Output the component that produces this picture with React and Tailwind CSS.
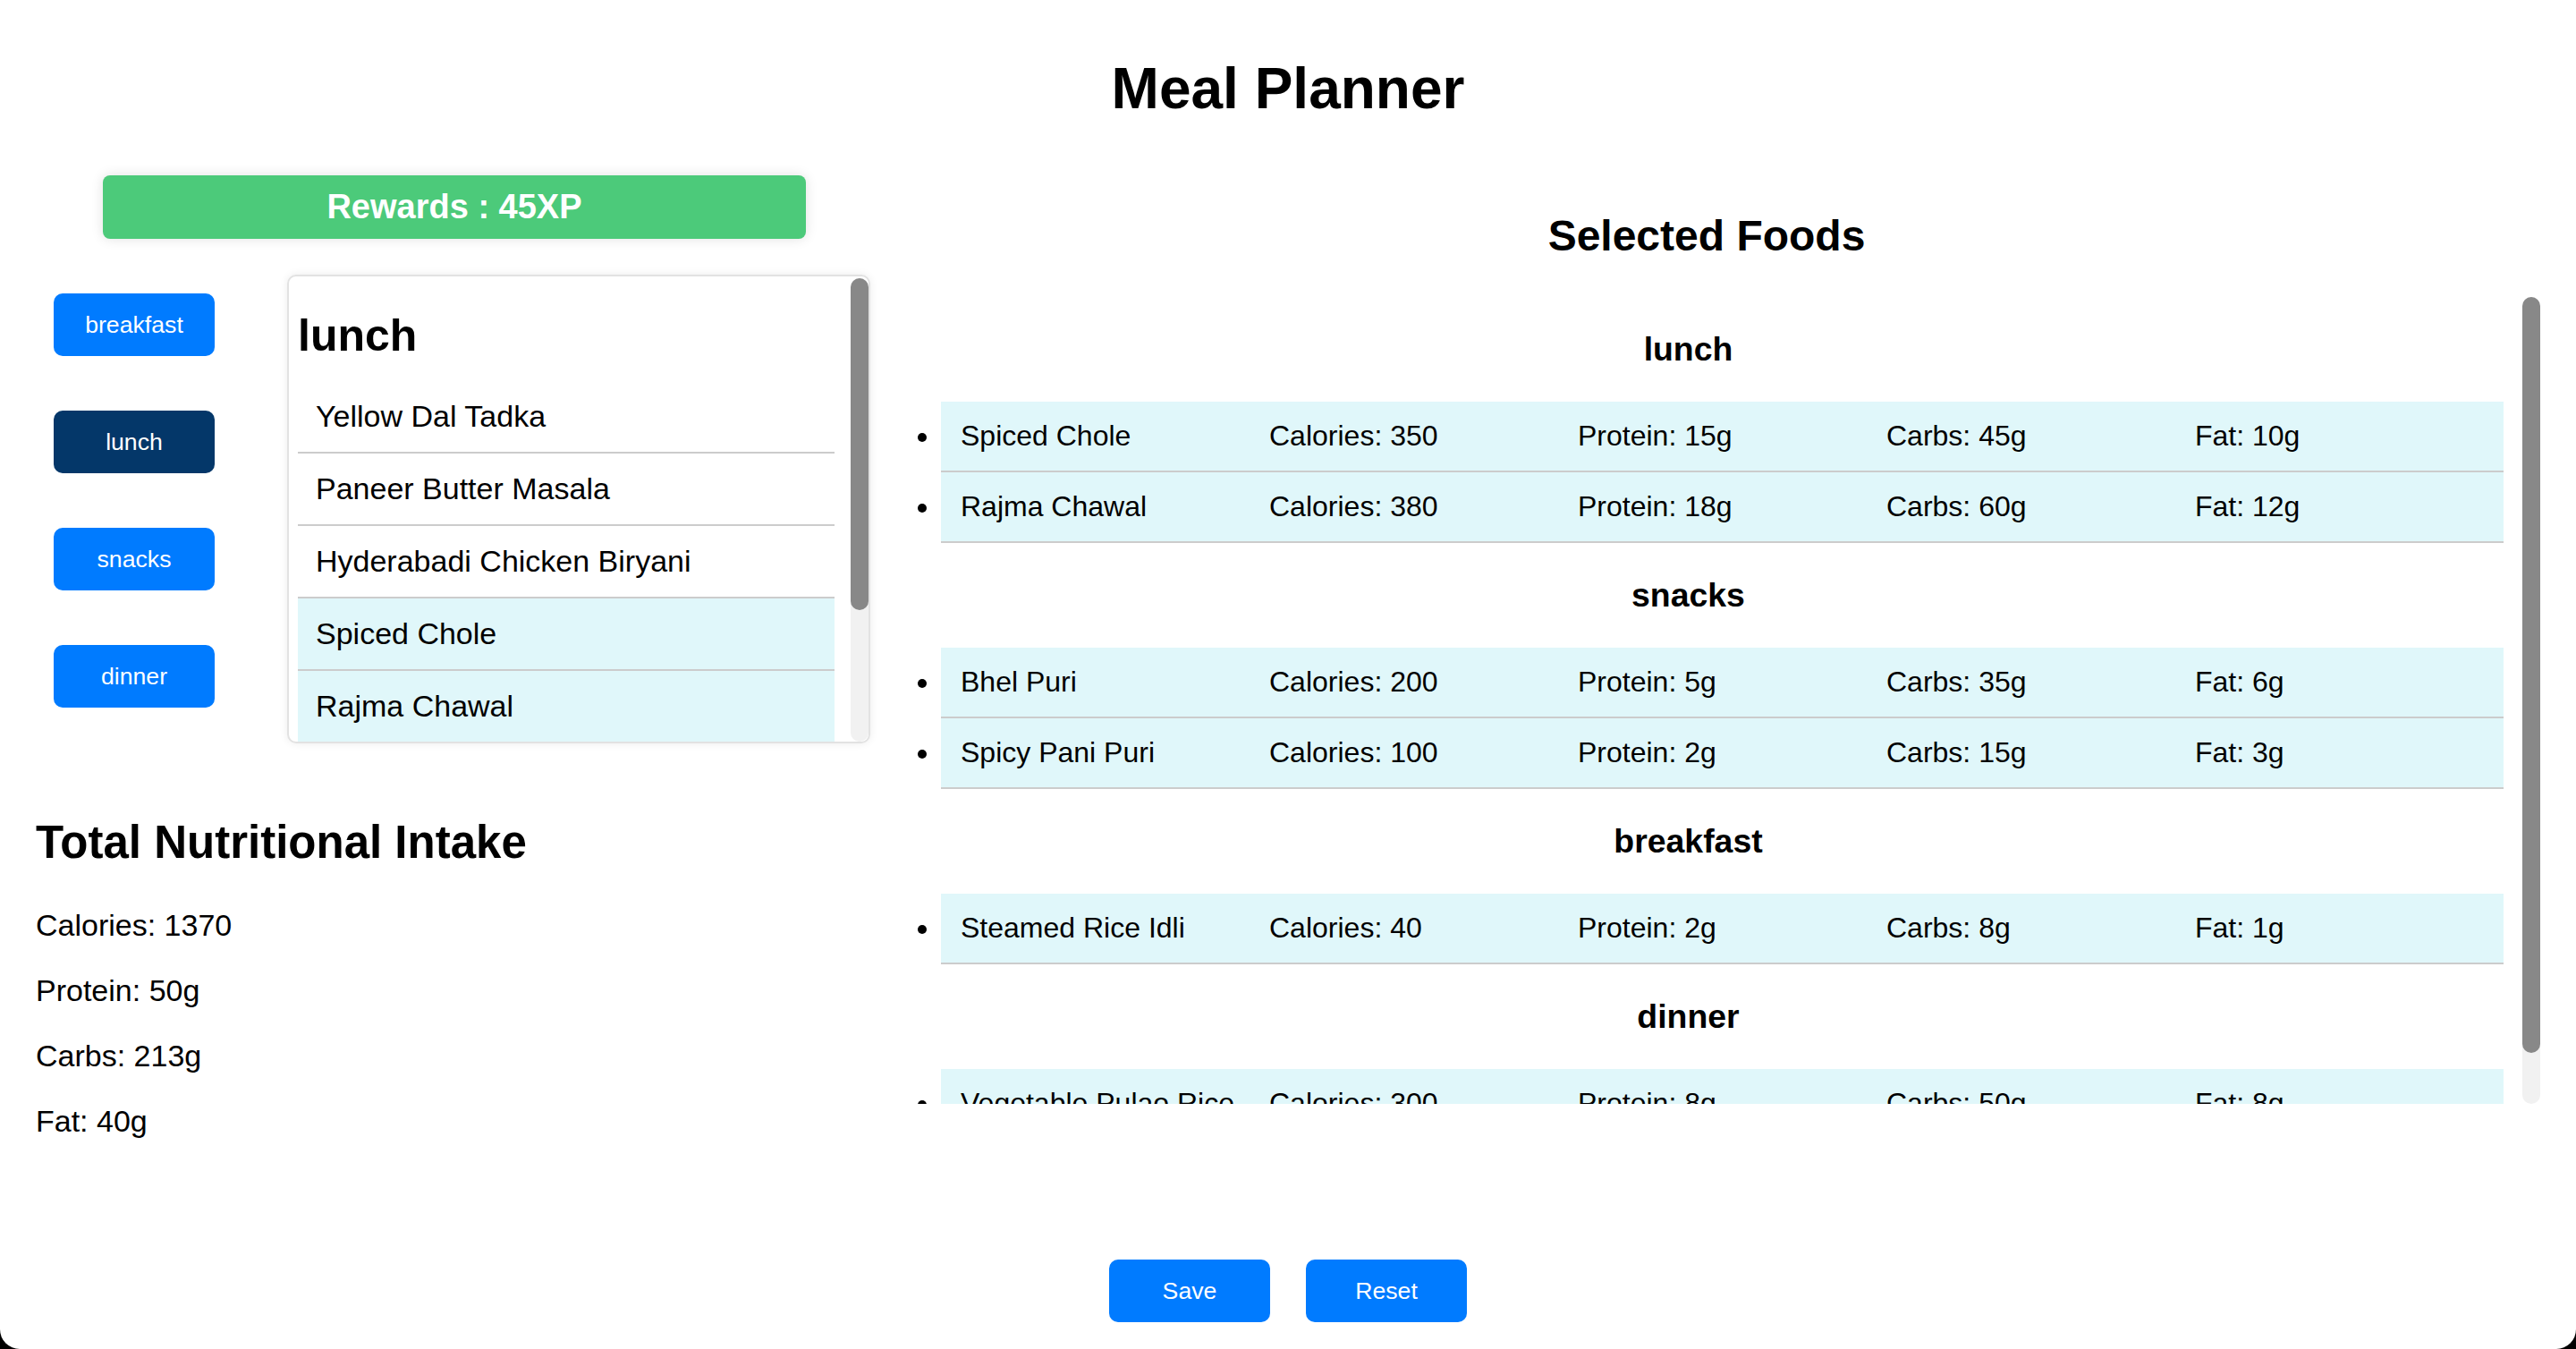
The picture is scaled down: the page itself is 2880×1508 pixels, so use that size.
import React, { useState } from 'react'

const mealFoods = {
  breakfast: ['Steamed Rice Idli', 'Masala Dosa', 'Poha', 'Upma', 'Aloo Paratha', 'Medu Vada', 'Besan Chilla'],
  lunch: ['Yellow Dal Tadka', 'Paneer Butter Masala', 'Hyderabadi Chicken Biryani', 'Spiced Chole', 'Rajma Chawal', 'Aloo Gobi', 'Chicken Curry'],
  snacks: ['Bhel Puri', 'Spicy Pani Puri', 'Samosa', 'Dhokla', 'Pav Bhaji', 'Kachori', 'Sev Puri'],
  dinner: ['Vegetable Pulao Rice', 'Palak Paneer', 'Butter Naan', 'Dal Makhani', 'Jeera Rice', 'Malai Kofta', 'Egg Curry'],
}

const selectedFoods = [
  {
    meal: 'lunch',
    items: [
      { name: 'Spiced Chole', calories: 350, protein: 15, carbs: 45, fat: 10 },
      { name: 'Rajma Chawal', calories: 380, protein: 18, carbs: 60, fat: 12 },
    ],
  },
  {
    meal: 'snacks',
    items: [
      { name: 'Bhel Puri', calories: 200, protein: 5, carbs: 35, fat: 6 },
      { name: 'Spicy Pani Puri', calories: 100, protein: 2, carbs: 15, fat: 3 },
    ],
  },
  {
    meal: 'breakfast',
    items: [{ name: 'Steamed Rice Idli', calories: 40, protein: 2, carbs: 8, fat: 1 }],
  },
  {
    meal: 'dinner',
    items: [{ name: 'Vegetable Pulao Rice', calories: 300, protein: 8, carbs: 50, fat: 8 }],
  },
]

// scrollbar drawn by hand, the headless browser hides the native one
function ScrollTrack({ thumb, className = '' }) {
  return (
    <div className={`w-[20px] shrink-0 bg-[#f1f1f1] rounded-[10px] ${className}`}>
      <div className={`w-full rounded-[10px] bg-[#888888] ${thumb}`} />
    </div>
  )
}

function App() {
  const [meal, setMeal] = useState('lunch')
  const picked = selectedFoods.flatMap((s) => s.items.map((i) => i.name))
  const all = selectedFoods.flatMap((s) => s.items)
  const total = (k) => all.reduce((a, i) => a + i[k], 0)

  return (
    <div className="h-screen bg-black">
      <div className="h-full bg-white rounded-b-[22px] flex flex-col text-black font-['Liberation_Sans',Arial,sans-serif]">
        <h1 className="mt-[62px] text-center text-[64px] leading-[74px] font-bold">Meal Planner</h1>

        <div className="mt-[60px] flex px-[40px]">
          {/* left side */}
          <div className="w-[936px] shrink-0">
            <div className="mx-auto w-[786px] h-[71px] rounded-[8px] bg-[#4cca7a] shadow-[0_0_14px_rgba(0,0,0,0.12)] flex items-center justify-center text-white font-bold text-[38px]">
              Rewards : 45XP
            </div>

            <div className="mt-[40px] flex">
              <div className="ml-[20px] mt-[21px] flex flex-col gap-[61px]">
                {['breakfast', 'lunch', 'snacks', 'dinner'].map((m) => (
                  <button
                    key={m}
                    onClick={() => setMeal(m)}
                    className={`w-[180px] h-[70px] rounded-[10px] text-white text-[26.67px] ${m === meal ? 'bg-[#043769]' : 'bg-[#007bff]'}`}
                  >
                    {m}
                  </button>
                ))}
              </div>

              <div className="ml-[81px] w-[652px] h-[524px] border-2 border-[#e2e2e2] rounded-[10px] shadow-[0_0_10px_rgba(0,0,0,0.08)] overflow-hidden flex">
                <div className="flex-1 min-w-0 overflow-hidden pl-[10px] pr-[18px]">
                  <h2 className="mt-[37px] mb-[22px] text-[50px] leading-[58px] font-bold">{meal}</h2>
                  <ul>
                    {mealFoods[meal].map((f) => (
                      <li
                        key={f}
                        className={`pl-[20px] py-[20px] leading-[39px] text-[34px] border-b-2 border-[#cccccc] ${picked.includes(f) ? 'bg-[#e0f7fa]' : ''}`}
                      >
                        {f}
                      </li>
                    ))}
                  </ul>
                </div>
                <ScrollTrack className="mt-[2px] h-[518px]" thumb="h-[371px]" />
              </div>
            </div>

            <h2 className="mt-[82px] text-[51px] leading-[58px] font-bold">Total Nutritional Intake</h2>
            <div className="mt-[43px] flex flex-col gap-[33px] text-[34px] leading-[40px]">
              <p>Calories: {total('calories')}</p>
              <p>Protein: {total('protein')}g</p>
              <p>Carbs: {total('carbs')}g</p>
              <p>Fat: {total('fat')}g</p>
            </div>
          </div>

          {/* right side */}
          <div className="flex-1 min-w-0">
            <h2 className="mt-[40px] text-center text-[48px] leading-[56px] font-bold">Selected Foods</h2>
            <div className="mt-[40px] h-[902px] flex">
              <div className="flex-1 min-w-0 overflow-hidden pr-[21px]">
                {selectedFoods.map((s) => (
                  <div key={s.meal}>
                    <h3 className="my-[37px] text-center text-[37.4px] leading-[43px] font-bold">{s.meal}</h3>
                    <ul className="pl-[76px] list-disc mb-[32px]">
                      {s.items.map((i) => (
                        <li key={i.name} className="bg-[#e0f7fa] border-b-2 border-[#cccccc] pl-[22px] py-[20px] text-[32px] leading-[37px]">
                          <div className="inline-flex">
                            <span className="w-[345px]">{i.name}</span>
                            <span className="w-[345px]">Calories: {i.calories}</span>
                            <span className="w-[345px]">Protein: {i.protein}g</span>
                            <span className="w-[345px]">Carbs: {i.carbs}g</span>
                            <span className="w-[345px]">Fat: {i.fat}g</span>
                          </div>
                        </li>
                      ))}
                    </ul>
                  </div>
                ))}
              </div>
              <ScrollTrack className="h-[902px]" thumb="h-[845px]" />
            </div>
          </div>
        </div>

        <div className="mt-auto mb-[30px] flex justify-center gap-[40px]">
          <button className="w-[180px] h-[70px] rounded-[10px] bg-[#007bff] text-white text-[26.67px]">Save</button>
          <button className="w-[180px] h-[70px] rounded-[10px] bg-[#007bff] text-white text-[26.67px]">Reset</button>
        </div>
      </div>
    </div>
  )
}

export default App
